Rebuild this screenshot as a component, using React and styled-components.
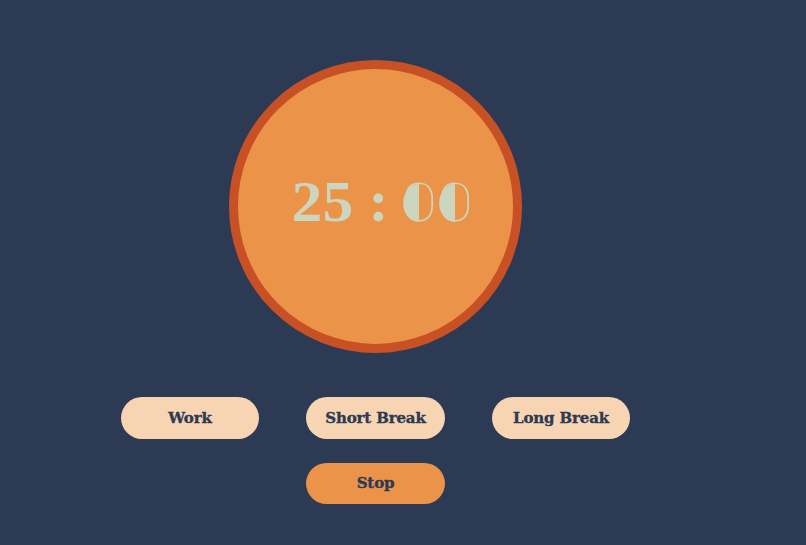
import styled, { createGlobalStyle } from "styled-components";

const GlobalStyle = createGlobalStyle`
  html, body {
    margin: 0;
    padding: 0;
    height: 100%;
    background-color: #2d3a54;
  }
`;

const Page = styled.div`
  width: 751px;
  height: 545px;
  padding-top: 60px;
  box-sizing: border-box;
  overflow: hidden;
  display: flex;
  flex-direction: column;
  align-items: center;
`;

const Timer = styled.div`
  width: 293px;
  height: 293px;
  box-sizing: border-box;
  border-radius: 50%;
  border: 9px solid #c75125;
  background-color: #ec934a;
  display: flex;
  align-items: center;
  justify-content: center;
  margin-bottom: 44px;
`;

const Time = styled.div`
  display: flex;
  align-items: baseline;
  margin: -10px 0 0 11px;
  color: #ccd5bd;
  font-family: "Liberation Serif", serif;
  font-weight: 700;
  font-size: 57px;
  line-height: 48px;
`;

const Digit = styled.span`
  display: inline-block;
  width: ${(props) => props.$width}px;
  text-align: center;
  transform: scaleX(1.08);
`;

const Colon = styled.span`
  width: 12px;
  margin: 0 22px 0 15px;
  text-align: center;
  font-size: 60px;
`;

const Zero = styled.span`
  display: inline-block;
  position: relative;
  width: 32px;
  margin-right: ${(props) => props.$gap || 0}px;
  text-align: center;
  font-family: Roboto, sans-serif;
  font-weight: 100;
  font-size: 54px;
  transform: scaleX(1.22);

  &::before {
    content: "";
    position: absolute;
    left: 3px;
    top: 5px;
    width: 13px;
    height: 38px;
    background-color: #ccd5bd;
    border-radius: 100% 0 0 100% / 50% 0 0 50%;
  }
`;

const Buttons = styled.div`
  display: grid;
  grid-template-columns: repeat(3, 138.5px);
  column-gap: 47px;
  row-gap: 24px;
`;

const Button = styled.button`
  grid-column: ${(props) => props.$column || "auto"};
  height: 41.5px;
  padding: 0;
  border: none;
  border-radius: 21px;
  background-color: ${(props) => (props.$active ? "#ec934a" : "#f8d5b2")};
  color: #2d3a54;
  font-family: "DejaVu Serif", serif;
  font-weight: 700;
  font-size: 15px;
  letter-spacing: -0.15px;
  -webkit-text-stroke: 0.35px #2d3a54;
  cursor: pointer;
`;

export default function App() {
  return (
    <Page>
      <GlobalStyle />
      <Timer>
        <Time>
          <Digit $width={30}>2</Digit>
          <Digit $width={32}>5</Digit>
          <Colon>:</Colon>
          <Zero $gap={4}>0</Zero>
          <Zero>0</Zero>
        </Time>
      </Timer>
      <Buttons>
        <Button>Work</Button>
        <Button>Short Break</Button>
        <Button>Long Break</Button>
        <Button $active $column="2">Stop</Button>
      </Buttons>
    </Page>
  );
}
